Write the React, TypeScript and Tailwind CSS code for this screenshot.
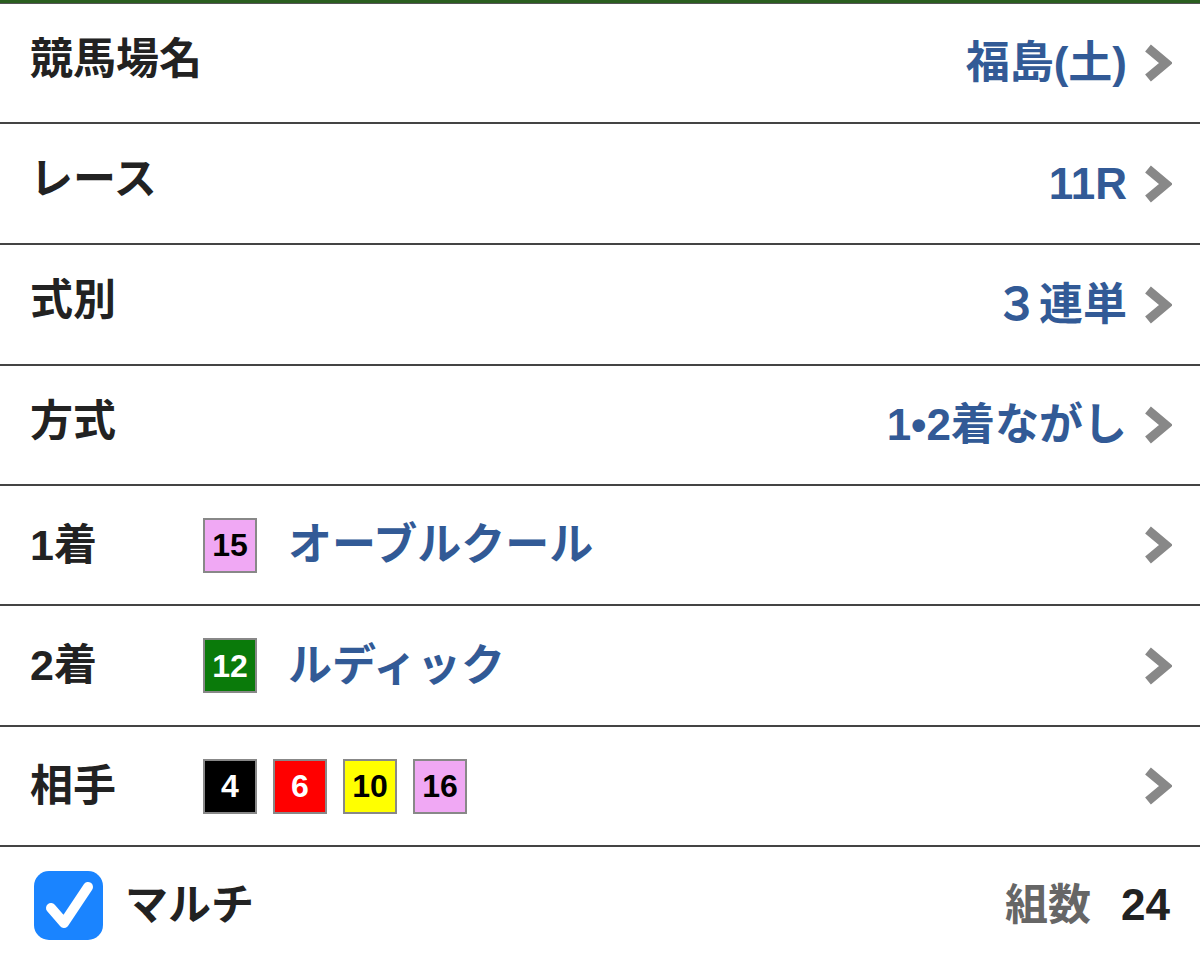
const FONT = {
  fontFamily: '"Liberation Sans", "Noto Sans CJK JP", sans-serif',
};

function Chevron() {
  return (
    <svg width="28" height="38" viewBox="0 0 28 38" className="shrink-0">
      <polyline
        points="4,4 22,19 4,34"
        fill="none"
        stroke="#888888"
        strokeWidth="9"
        strokeLinejoin="miter"
      />
    </svg>
  );
}

type Waku = { n: string; bg: string; fg: string };

function Badge({ w }: { w: Waku }) {
  return (
    <div
      className={`flex h-[55px] w-[54px] items-center justify-center border-2 border-[#888888] text-[32px] font-bold leading-none ${w.bg} ${w.fg}`}
    >
      {w.n}
    </div>
  );
}

function SelectRow({
  label,
  value,
  h,
}: {
  label: string;
  value: string;
  h: string;
}) {
  return (
    <div
      className={`flex items-center justify-between border-b-2 border-[#444444] pl-[30px] pr-[28px] ${h}`}
    >
      <span className="mb-[8px] text-[43px] font-bold leading-none text-[#222222]">
        {label}
      </span>
      <div className="flex items-center gap-[17px]">
        <span className="text-[44px] font-bold leading-none text-[#325a96]">
          {value}
        </span>
        <Chevron />
      </div>
    </div>
  );
}

function HorseRow({
  label,
  h,
  children,
}: {
  label: string;
  h: string;
  children: React.ReactNode;
}) {
  return (
    <div
      className={`flex items-center border-b-2 border-[#444444] pl-[30px] pr-[28px] ${h}`}
    >
      <span className="w-[173px] shrink-0 text-[43px] font-bold leading-none text-[#222222]">
        {label}
      </span>
      <div className="flex flex-1 items-center">{children}</div>
      <Chevron />
    </div>
  );
}

export default function App() {
  const aite: Waku[] = [
    { n: "4", bg: "bg-black", fg: "text-white" },
    { n: "6", bg: "bg-[#ff0000]", fg: "text-white" },
    { n: "10", bg: "bg-[#ffff00]", fg: "text-black" },
    { n: "16", bg: "bg-[#f0a8f4]", fg: "text-black" },
  ];

  return (
    <div className="h-[964px] w-[1200px] overflow-hidden bg-white" style={FONT}>
      <div className="h-[3px] bg-[#2b5e20]" />
      <div className="h-[1px] bg-[#555555]" />

      <SelectRow label="競馬場名" value="福島(土)" h="h-[120px]" />
      <SelectRow label="レース" value="11R" h="h-[121px]" />
      <SelectRow label="式別" value="３連単" h="h-[121px]" />
      <SelectRow label="方式" value="1•2着ながし" h="h-[120px]" />

      <HorseRow label="1着" h="h-[120px]">
        <Badge w={{ n: "15", bg: "bg-[#f0a8f4]", fg: "text-black" }} />
        <span className="ml-[31px] text-[44px] font-bold leading-none text-[#325a96]">
          オーブルクール
        </span>
      </HorseRow>

      <HorseRow label="2着" h="h-[121px]">
        <Badge w={{ n: "12", bg: "bg-[#0a7a0a]", fg: "text-white" }} />
        <span className="ml-[31px] text-[44px] font-bold leading-none text-[#325a96]">
          ルディック
        </span>
      </HorseRow>

      <HorseRow label="相手" h="h-[120px]">
        <div className="flex items-center gap-[16px]">
          {aite.map((w) => (
            <Badge key={w.n} w={w} />
          ))}
        </div>
      </HorseRow>

      <div className="flex h-[116px] items-center justify-between pl-[34px] pr-[30px]">
        <div className="flex items-center gap-[22px]">
          <div className="h-[69px] w-[69px] rounded-[15px] bg-[#1a84ff]">
            <svg width="69" height="69" viewBox="0 0 69 69">
              <polyline
                points="17,37 30,52 54,16"
                fill="none"
                stroke="white"
                strokeWidth="10"
                strokeLinecap="round"
                strokeLinejoin="round"
              />
            </svg>
          </div>
          <span className="text-[43px] font-bold leading-none text-[#222222]">
            マルチ
          </span>
        </div>
        <div className="flex items-center gap-[30px]">
          <span className="text-[43px] font-bold leading-none text-[#666666]">
            組数
          </span>
          <span className="text-[44px] font-bold leading-none text-[#222222]">
            24
          </span>
        </div>
      </div>
    </div>
  );
}
